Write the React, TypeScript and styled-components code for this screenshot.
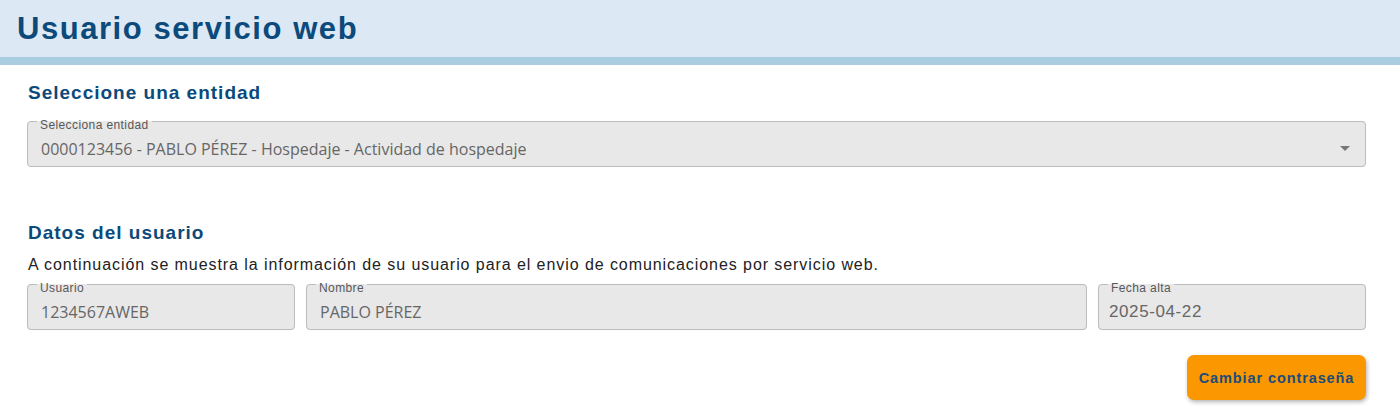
import React from 'react';
import styled, {createGlobalStyle} from 'styled-components';

const GlobalStyle = createGlobalStyle`
  html, body {
    margin: 0;
    padding: 0;
    background: #ffffff;
    font-family: "Liberation Sans", Arial, sans-serif;
  }
`;

const Page = styled.div`
  width: 1400px;
  min-height: 418px;
  background: #fff;
`;

const Header = styled.header`
  height: 57px;
  background: #dde8f5;
  border-bottom: 8px solid #a9cde0;
  display: flex;
  align-items: center;
  padding-left: 17px;
`;

const Title = styled.h1`
  margin: 0;
  font-size: 31px;
  font-weight: 700;
  letter-spacing: 1.55px;
  color: #0b4a7a;
`;

const Content = styled.main`
  padding: 16px 34px 0 27px;
  display: flex;
  flex-direction: column;
`;

const SectionTitle = styled.h2<{$top?: number}>`
  margin: ${(p) => p.$top ?? 0}px 0 0 1px;
  font-size: 19px;
  line-height: 24px;
  font-weight: 700;
  letter-spacing: 1px;
  color: #0b4a7a;
`;

const Description = styled.p`
  margin: 11px 0 0 1px;
  font-size: 16px;
  line-height: 18px;
  letter-spacing: 0.93px;
  color: #222;
`;

const Field = styled.fieldset`
  margin: 0;
  min-width: 0;
  padding: 0 10px 6px 10px;
  border: 1px solid #bcbcbc;
  border-radius: 4px;
  background: #e8e8e8;
  height: 56px;
  box-sizing: border-box;
  display: flex;
  align-items: flex-end;
  position: relative;
`;

const Legend = styled.legend`
  padding: 8px 3px 0;
  margin-left: -1px;
  font-family: "Liberation Sans", Arial, sans-serif;
  font-size: 12px;
  line-height: 12px;
  letter-spacing: 0.4px;
  color: #585858;
`;

const Value = styled.div<{$date?: boolean}>`
  margin-left: ${(p) => (p.$date ? 0 : 3)}px;
  font-family: ${(p) => (p.$date ? '"Liberation Sans", Arial' : '"Open Sans", "Noto Sans"')}, sans-serif;
  font-size: ${(p) => (p.$date ? 17 : 16)}px;
  line-height: 22px;
  letter-spacing: ${(p) => (p.$date ? '0.6px' : '0')};
  color: #666;
  white-space: nowrap;
`;

const SelectWrap = styled.div`
  margin-top: 6px;
`;

const Caret = styled.span`
  position: absolute;
  right: 15px;
  top: 15px;
  width: 0;
  height: 0;
  border-left: 5px solid transparent;
  border-right: 5px solid transparent;
  border-top: 5px solid #777;
`;

const FieldRow = styled.div`
  margin-top: 0;
  display: grid;
  grid-template-columns: 268px 1fr 268px;
  gap: 11px;
`;

const Actions = styled.div`
  display: flex;
  justify-content: flex-end;
  margin-top: 25px;
`;

const PrimaryButton = styled.button`
  width: 179px;
  height: 45px;
  border: none;
  border-radius: 7px;
  background: #fb9700;
  color: #1a4c7c;
  font-family: "Liberation Sans", Arial, sans-serif;
  font-size: 14.5px;
  font-weight: 700;
  letter-spacing: 0.9px;
  box-shadow: 1px 2px 4px rgba(0, 0, 0, 0.3);
  cursor: pointer;
`;

const App: React.FC = () => {
  return (
    <Page>
      <GlobalStyle />
      <Header>
        <Title>Usuario servicio web</Title>
      </Header>
      <Content>
        <SectionTitle>Seleccione una entidad</SectionTitle>
        <SelectWrap>
          <Field>
            <Legend>Selecciona entidad</Legend>
            <Value>0000123456 - PABLO PÉREZ - Hospedaje - Actividad de hospedaje</Value>
            <Caret />
          </Field>
        </SelectWrap>

        <SectionTitle $top={54}>Datos del usuario</SectionTitle>
        <Description>
          A continuación se muestra la información de su usuario para el envio de comunicaciones por servicio web.
        </Description>
        <FieldRow>
          <Field>
            <Legend>Usuario</Legend>
            <Value>1234567AWEB</Value>
          </Field>
          <Field>
            <Legend>Nombre</Legend>
            <Value>PABLO PÉREZ</Value>
          </Field>
          <Field>
            <Legend>Fecha alta</Legend>
            <Value $date>2025-04-22</Value>
          </Field>
        </FieldRow>
        <Actions>
          <PrimaryButton>Cambiar contraseña</PrimaryButton>
        </Actions>
      </Content>
    </Page>
  );
};

export default App;
